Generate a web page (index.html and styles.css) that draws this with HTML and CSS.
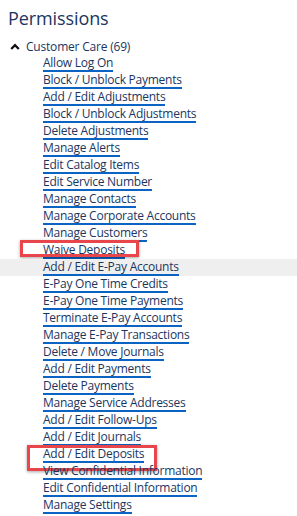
FILE: index.html
```html
<!DOCTYPE html>
<html>
<head>
<meta charset="utf-8">
<link rel="stylesheet" href="styles.css">
</head>
<body>
<div class="panel">
  <h1 class="title">Permissions</h1>
  <div class="group">
    <div class="group-head">
      <svg class="chev" width="10" height="7" viewBox="0 0 10 7"><path d="M1.2 6 L5 2.2 L8.8 6" fill="none" stroke="#111" stroke-width="2.3"/></svg>
      <span>Customer Care (69)</span>
    </div>
    <ul class="items">
      <li><a>Allow Log On</a></li>
      <li><a>Block / Unblock Payments</a></li>
      <li><a>Add / Edit Adjustments</a></li>
      <li><a>Block / Unblock Adjustments</a></li>
      <li><a>Delete Adjustments</a></li>
      <li><a>Manage Alerts</a></li>
      <li><a>Edit Catalog Items</a></li>
      <li><a>Edit Service Number</a></li>
      <li><a>Manage Contacts</a></li>
      <li><a>Manage Corporate Accounts</a></li>
      <li><a>Manage Customers</a></li>
      <li class="boxed1"><a>Waive Deposits</a></li>
      <li class="hover"><a>Add / Edit E-Pay Accounts</a></li>
      <li><a>E-Pay One Time Credits</a></li>
      <li><a>E-Pay One Time Payments</a></li>
      <li><a>Terminate E-Pay Accounts</a></li>
      <li><a>Manage E-Pay Transactions</a></li>
      <li><a>Delete / Move Journals</a></li>
      <li><a>Add / Edit Payments</a></li>
      <li><a>Delete Payments</a></li>
      <li><a>Manage Service Addresses</a></li>
      <li><a>Add / Edit Follow-Ups</a></li>
      <li><a>Add / Edit Journals</a></li>
      <li class="boxed2"><a>Add / Edit Deposits</a></li>
      <li><a>View Confidential Information</a></li>
      <li><a>Edit Confidential Information</a></li>
      <li><a>Manage Settings</a></li>
    </ul>
  </div>
</div>
</body>
</html>
```
FILE: styles.css
```css
html, body {
  margin: 0;
  padding: 0;
  background: #fff;
}
body {
  font-family: "Open Sans", "Noto Sans", sans-serif;
  color: #1a365f;
}
.panel {
  padding: 6px 0 0 8px;
}
.title {
  margin: 0;
  font-size: 18px;
  font-weight: 400;
  line-height: 24px;
  color: #1a365f;
  letter-spacing: -0.1px;
}
.group {
  margin-top: 8px;
}
.group-head {
  display: flex;
  align-items: center;
  gap: 6px;
  padding-left: 2px;
  font-size: 12px;
  line-height: 17px;
  letter-spacing: -0.2px;
}
.chev {
  display: block;
}
.items {
  list-style: none;
  margin: 0;
  padding: 0;
}
.items li {
  position: relative;
  height: 17px;
  padding-left: 43px;
  margin-left: -8px;
  font-size: 12px;
  line-height: 15px;
  letter-spacing: -0.25px;
}
.items a {
  display: inline-block;
  border-bottom: 2px solid #0b63c4;
  color: #1a365f;
}
.items li.hover {
  background: #efefef;
}
.boxed1::after,
.boxed2::after {
  content: "";
  position: absolute;
  border: 3px solid #e8464b;
  box-shadow: 0 1px 3px rgba(0,0,0,0.35);
  pointer-events: none;
}
.boxed1::after {
  left: 20px;
  top: -2px;
  width: 113px;
  height: 11px;
}
.boxed2::after {
  left: 27px;
  top: -1px;
  width: 124px;
  height: 20px;
}
```
